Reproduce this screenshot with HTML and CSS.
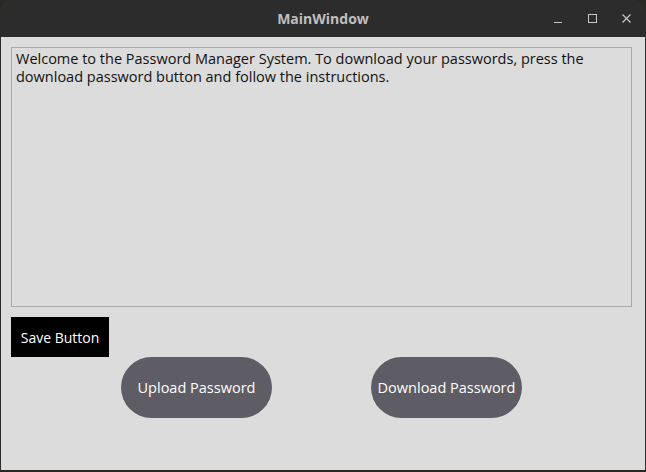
FILE: index.html
```html
<!DOCTYPE html>
<html>
<head>
<meta charset="utf-8">
<link rel="stylesheet" href="styles.css">
</head>
<body>
<div class="window">
  <div class="titlebar">
    <div class="title">MainWindow</div>
    <svg class="controls" width="84" height="24" viewBox="0 0 84 24">
      <path d="M2 14.5h8" stroke="#c8c8c8" stroke-width="1"/>
      <rect x="36.5" y="6.5" width="8" height="8" fill="none" stroke="#c8c8c8" stroke-width="1"/>
      <path d="M70.5 6.5L78.5 14.5M78.5 6.5L70.5 14.5" stroke="#c8c8c8" stroke-width="1.2"/>
    </svg>
  </div>
  <div class="body">
    <div class="textedit">Welcome to the Password Manager System. To download your passwords, press the<br>download password button and follow the instructions.</div>
    <div class="save">Save Button</div>
    <div class="row">
      <div class="pill upload">Upload Password</div>
      <div class="pill download">Download Password</div>
    </div>
  </div>
</div>
</body>
</html>
```
FILE: styles.css
```css
html, body {
  margin: 0;
  padding: 0;
  background: #2a2822;
  width: 646px;
  height: 472px;
  overflow: hidden;
}
.window {
  width: 646px;
  height: 470px;
  display: flex;
  flex-direction: column;
  background: #2c2c2c;
  border-radius: 12px 12px 0 0;
  overflow: hidden;
  font-family: "Open Sans", "DejaVu Sans", sans-serif;
}
.titlebar {
  height: 37px;
  flex: none;
  position: relative;
  display: flex;
  align-items: center;
  justify-content: center;
  background: #2c2c2c;
}
.title {
  color: #bfbfbf;
  font-weight: bold;
  font-size: 14px;
  margin-top: -1px;
}
.controls {
  position: absolute;
  left: 552px;
  top: 8px;
  display: block;
}
.body {
  flex: 1;
  margin: 0 1px;
  background: #dcdcdc;
  padding: 10px 13px 0 10px;
  display: flex;
  flex-direction: column;
}
.textedit {
  height: 253px;
  border: 1px solid #a9a9a9;
  padding: 2px 4px 3px;
  font-size: 14.5px;
  line-height: 18px;
  color: #111;
  white-space: nowrap;
}
.save {
  margin-top: 10px;
  width: 98px;
  height: 40px;
  background: #000;
  color: #fff;
  font-size: 14px;
  display: flex;
  align-items: center;
  justify-content: center;
}
.row {
  display: flex;
  padding-left: 110px;
  gap: 99px;
}
.pill {
  width: 151px;
  height: 61px;
  border-radius: 31px;
  background: #5e5c64;
  color: #fff;
  font-size: 14.5px;
  display: flex;
  align-items: center;
  justify-content: center;
}
```
